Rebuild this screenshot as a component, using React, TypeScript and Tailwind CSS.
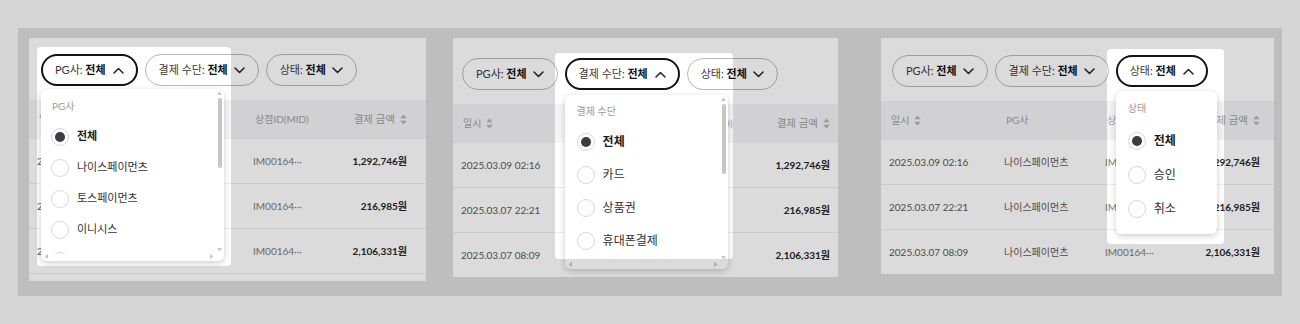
import React from "react";

const rows = [
  { date: "2025.03.09 02:16", pg: "나이스페이먼츠", amount: "1,292,746원" },
  { date: "2025.03.07 22:21", pg: "나이스페이먼츠", amount: "216,985원" },
  { date: "2025.03.07 08:09", pg: "나이스페이먼츠", amount: "2,106,331원" },
];

function Chevron({ up }: { up?: boolean }) {
  return (
    <svg width="11" height="7" viewBox="0 0 11 7" fill="none" className={up ? "rotate-180" : ""}>
      <path d="M1 1l4.5 4.5L10 1" stroke="#2b2b2b" strokeWidth="1.6" strokeLinecap="round" strokeLinejoin="round" />
    </svg>
  );
}

function SortIcon() {
  return (
    <svg width="7" height="11" viewBox="0 0 7 11">
      <path d="M3.5 0.5L6.8 4.3H0.2z M3.5 10.5L0.2 6.7h6.6z" fill="#b4b4ba" />
    </svg>
  );
}

function Tri({ dir }: { dir: "up" | "down" | "left" | "right" }) {
  const d = {
    up: "M2.5 0.5L5 4H0z",
    down: "M2.5 4.5L0 1h5z",
    left: "M0.5 2.5L4 0v5z",
    right: "M4.5 2.5L1 0v5z",
  }[dir];
  return (
    <svg width="5" height="5" viewBox="0 0 5 5">
      <path d={d} fill="#c9c9cc" />
    </svg>
  );
}

function Radio({ text, checked, row }: { text: string; checked?: boolean; row: string }) {
  return (
    <div className={`flex items-center gap-2 ${row}`}>
      <span className="flex size-[18px] shrink-0 items-center justify-center rounded-full border border-[#d8d8e0] bg-white">
        {checked && <span className="size-[10px] rounded-full bg-[#3c3c44]" />}
      </span>
      <span className={checked ? "font-bold text-[#1c1c1c]" : "text-[#333]"}>{text}</span>
    </div>
  );
}

interface MenuProps {
  label: string;
  options: string[];
  box: string;
  view: string;
  row: string;
  text: string;
  labelPad: string;
  listPad: string;
  scroll?: boolean;
}

function Menu({ label, options, box, view, row, text, labelPad, listPad, scroll }: MenuProps) {
  return (
    <div className={`absolute left-0 z-10 overflow-hidden rounded-md bg-white shadow-[0_2px_6px_rgba(0,0,0,0.2)] ${box}`}>
      <div className={`overflow-hidden ${view}`}>
        <div className={`text-[10px] leading-[12px] text-[#9b9b9b] ${labelPad}`}>{label}</div>
        <div className={`${listPad} ${text}`}>
          {options.map((o, i) => (
            <Radio key={o} text={o} checked={i === 0} row={row} />
          ))}
        </div>
      </div>
      {scroll && (
        <>
          <span className="absolute right-[2px] top-[2px] flex"><Tri dir="up" /></span>
          <span className="absolute right-[2px] top-[9px] h-[70px] w-[4px] rounded-full bg-[#c6c6c6]" />
          <span className="absolute bottom-[9px] right-[2px] flex"><Tri dir="down" /></span>
          <span className="absolute bottom-[2px] left-[3px] flex"><Tri dir="left" /></span>
          <span className="absolute bottom-[2px] right-[10px] flex"><Tri dir="right" /></span>
        </>
      )}
    </div>
  );
}

function FilterButton({ label, active }: { label: string; active?: boolean }) {
  return (
    <div
      className={
        active
          ? "flex h-8 items-center gap-[7px] whitespace-nowrap rounded-full border-2 border-[#141414] bg-white px-[12px] text-[11px]"
          : "flex h-8 items-center gap-[6px] whitespace-nowrap rounded-full border border-[#b9b9b9] bg-white px-[13px] text-[11px]"
      }
    >
      <span className="text-[#3a3a3a]">
        {label}: <span className="font-bold text-[#111]">전체</span>
      </span>
      <Chevron up={active} />
    </div>
  );
}

function Table({ pr }: { pr: string }) {
  return (
    <div className="mt-[14px] text-[10px]">
      <div className={`grid h-[39px] grid-cols-[115px_101px_1fr_auto] items-center bg-[#f4f4f6] pl-[10px] text-[#a0a0a6] ${pr}`}>
        <div className="flex items-center gap-[5px]">
          일시 <SortIcon />
        </div>
        <div>PG사</div>
        <div>상점ID(MID)</div>
        <div className="flex items-center gap-[5px] text-[10.5px]">
          결제 금액 <SortIcon />
        </div>
      </div>
      {rows.map((r) => (
        <div
          key={r.date}
          className={`grid h-[45px] grid-cols-[115px_101px_1fr_auto] items-center border-b border-[#ededed] pl-[8px] ${pr}`}
        >
          <div className="text-[#585858]">{r.date}</div>
          <div className="text-[#585858]">{r.pg}</div>
          <div className="text-[#7a7a7a]">IM00164···</div>
          <div className="text-right font-bold text-[#262626]">{r.amount}</div>
        </div>
      ))}
    </div>
  );
}

const labels = ["PG사", "결제 수단", "상태"];

interface PanelProps {
  size: string;
  bar: string;
  pr: string;
  active: number;
  spot: string;
  menu: MenuProps;
}

function Panel({ size, bar, pr, active, spot, menu }: PanelProps) {
  return (
    <div className={`relative isolate shrink-0 overflow-hidden bg-white ${size}`}>
      <div className={`flex items-start gap-[7px] ${bar}`}>
        {labels.map((l, i) =>
          i === active ? (
            <div key={l} className="relative">
              <FilterButton label={l} active />
              <Menu {...menu} />
              <div className={`absolute z-20 rounded-[4px] shadow-[0_0_0_2000px_rgba(0,0,0,0.14)] ${spot}`} />
            </div>
          ) : (
            <FilterButton key={l} label={l} />
          )
        )}
      </div>
      <Table pr={pr} />
    </div>
  );
}

export default function App() {
  return (
    <div className="min-h-[324px] bg-[#d6d6d6] pl-[18px] pt-[28px] font-[family-name:Lato,Noto_Sans_CJK_KR,sans-serif]">
      <div className="flex h-[268px] w-[1264px] items-start bg-[#bebebe] pl-[11px] pt-[10px]">
        <Panel
          size="w-[397px] h-[243px]"
          bar="pl-[12px] pt-[16px]"
          pr="pr-[19px]"
          active={0}
          spot="-left-[4px] -top-[7px] w-[194px] h-[219px]"
          menu={{
            label: "PG사",
            options: ["전체", "나이스페이먼츠", "토스페이먼츠", "이니시스", "KCP"],
            box: "top-[calc(100%+3px)] w-[183px] h-[172px]",
            view: "h-[165px]",
            row: "h-[31px]",
            text: "text-[11px]",
            labelPad: "px-[11px] pt-[11px]",
            listPad: "mt-[9px] px-[10px]",
            scroll: true,
          }}
        />
        <div className="w-[27px] shrink-0" />
        <Panel
          size="w-[385px] h-[239px]"
          bar="pl-[9px] pt-[20px]"
          pr="pr-[8px]"
          active={1}
          spot="-left-[10px] -top-[5px] w-[178px] h-[206px]"
          menu={{
            label: "결제 수단",
            options: ["전체", "카드", "상품권", "휴대폰결제", "계좌이체"],
            box: "top-[calc(100%+5px)] w-[163px] h-[174px]",
            view: "h-[169px]",
            row: "h-[33px]",
            text: "text-[12px]",
            labelPad: "px-[12px] pt-[10px]",
            listPad: "mt-[8px] px-[12px]",
            scroll: true,
          }}
        />
        <div className="w-[43px] shrink-0" />
        <Panel
          size="w-[393px] h-[236px]"
          bar="pl-[11px] pt-[17px]"
          pr="pr-[14px]"
          active={2}
          spot="-left-[9px] -top-[6px] w-[117px] h-[195px]"
          menu={{
            label: "상태",
            options: ["전체", "승인", "취소"],
            box: "top-[calc(100%+4px)] w-[101px] pb-[8px]",
            view: "",
            row: "h-[34px]",
            text: "text-[12px]",
            labelPad: "px-[12px] pt-[11px]",
            listPad: "mt-[10px] px-[12px]",
          }}
        />
      </div>
    </div>
  );
}
